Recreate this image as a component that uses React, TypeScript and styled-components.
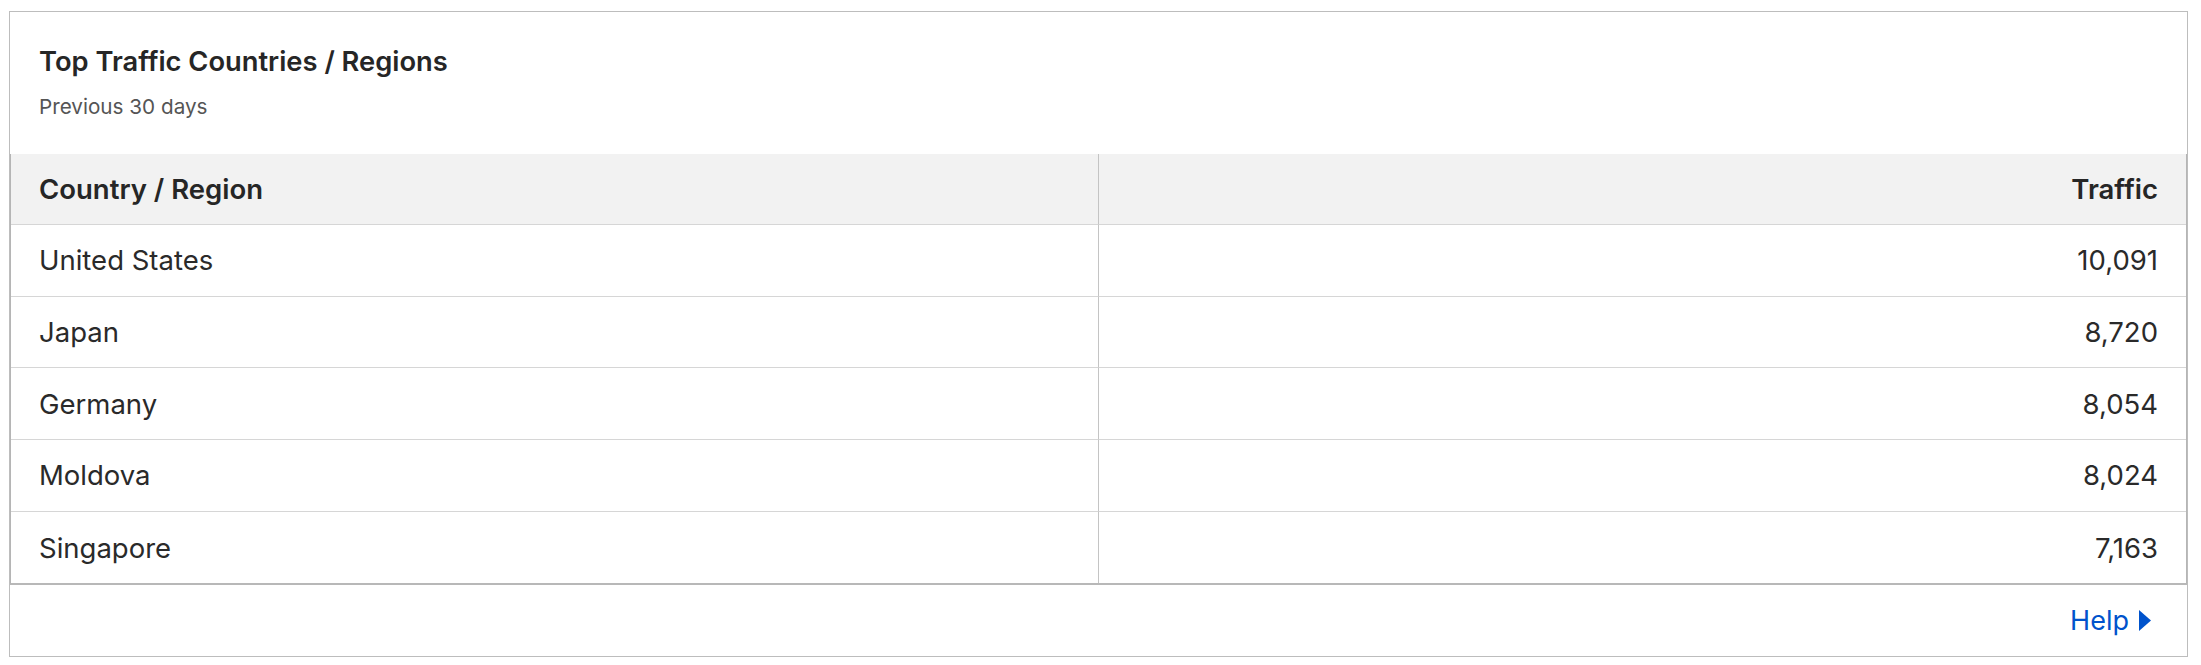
import React from 'react'
import styled, { createGlobalStyle } from 'styled-components'

type TrafficRow = {
  country: string
  traffic: number
}

const rows: TrafficRow[] = [
  { country: 'United States', traffic: 10091 },
  { country: 'Japan', traffic: 8720 },
  { country: 'Germany', traffic: 8054 },
  { country: 'Moldova', traffic: 8024 },
  { country: 'Singapore', traffic: 7163 },
]

const GlobalStyle = createGlobalStyle`
  html, body {
    margin: 0;
    padding: 0;
    background: #ffffff;
  }
  body {
    font-family: Inter, 'Noto Sans', 'Liberation Sans', sans-serif;
    color: #2a2a2a;
  }
`

const Page = styled.div`
  padding: 11px 13px 0 9px;
`

const Card = styled.section`
  border: 1px solid #bdbdbd;
  background: #ffffff;
`

const CardHeader = styled.header`
  padding: 34px 29px 34px 29px;
  h2 {
    margin: 0;
    font-size: 27.3px;
    line-height: 32px;
    font-weight: 600;
    color: #262626;
  }
  p {
    margin: 16px 0 0;
    font-size: 20.7px;
    line-height: 26px;
    color: #555555;
  }
`

const Table = styled.table`
  width: 100%;
  border-collapse: separate;
  border-spacing: 0;
  table-layout: fixed;
  border-left: 1px solid #b5b5b5;
  border-right: 1px solid #b5b5b5;
  border-bottom: 2px solid #b8b8b8;
`

const HeadCell = styled.th<{ $align?: 'left' | 'right' }>`
  height: 71px;
  box-sizing: border-box;
  padding: 0 28px;
  background: #f2f2f2;
  border-bottom: 1px solid #d6d6d6;
  text-align: ${(p) => p.$align || 'left'};
  font-size: 27.5px;
  font-weight: 600;
  color: #262626;
  &:first-child {
    border-right: 1px solid #c4c4c4;
  }
`

const BodyRow = styled.tr`
  &:last-child td {
    border-bottom: none;
  }
`

const Cell = styled.td<{ $align?: 'left' | 'right' }>`
  height: 71.7px;
  box-sizing: border-box;
  padding: 0 28px;
  border-bottom: 1px solid #d6d6d6;
  text-align: ${(p) => p.$align || 'left'};
  font-size: 27.5px;
  font-weight: 400;
  color: #2a2a2a;
  &:first-child {
    border-right: 1px solid #c4c4c4;
  }
`

const CardFooter = styled.footer`
  height: 71px;
  display: flex;
  align-items: center;
  justify-content: flex-end;
  padding-right: 36px;
`

const HelpLink = styled.a`
  display: inline-flex;
  align-items: center;
  gap: 10px;
  font-size: 27px;
  color: #0053cc;
  text-decoration: none;
  cursor: pointer;
  svg {
    display: block;
  }
`

const App = () => {
  return (
    <>
      <GlobalStyle />
      <Page>
        <Card>
          <CardHeader>
            <h2>Top Traffic Countries / Regions</h2>
            <p>Previous 30 days</p>
          </CardHeader>
          <Table>
            <thead>
              <tr>
                <HeadCell>Country / Region</HeadCell>
                <HeadCell $align='right'>Traffic</HeadCell>
              </tr>
            </thead>
            <tbody>
              {rows.map((row) => (
                <BodyRow key={row.country}>
                  <Cell>{row.country}</Cell>
                  <Cell $align='right'>{row.traffic.toLocaleString('en-US')}</Cell>
                </BodyRow>
              ))}
            </tbody>
          </Table>
          <CardFooter>
            <HelpLink>
              Help
              <svg width='12' height='21' viewBox='0 0 12 21'>
                <path d='M0 0 L12 10.5 L0 21 Z' fill='currentColor' />
              </svg>
            </HelpLink>
          </CardFooter>
        </Card>
      </Page>
    </>
  )
}

export default App
